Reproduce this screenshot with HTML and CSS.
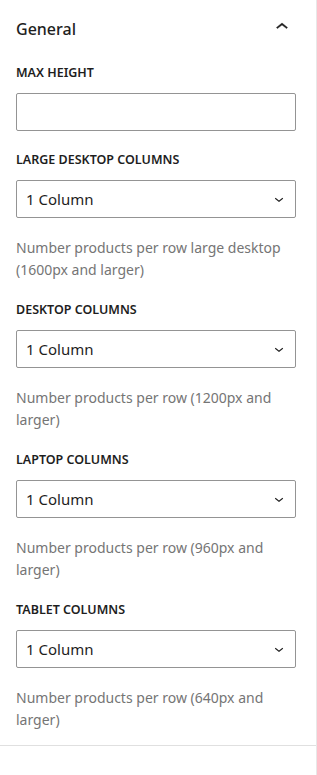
FILE: index.html
```html
<!DOCTYPE html>
<html lang="en">
  <head>
    <meta charset="UTF-8" />
    <meta name="viewport" content="width=device-width, initial-scale=1.0" />
    <title>Block Settings</title>

    <link rel="stylesheet" href="styles.css">
  </head>

  <body>
    <div class="sidebar">
      <div class="panel">
        <button class="panel-header">
          <span class="panel-title">General</span>
          <svg class="panel-toggle" viewBox="0 0 24 24" width="24" height="24">
            <path d="M6.5 12.4L12 8l5.5 4.4-.9 1.2L12 10l-4.6 3.6-1-1.2z" />
          </svg>
        </button>

        <div class="panel-body">
          <div class="field">
            <label class="field-label" for="max-height">Max Height</label>
            <input class="text-input" id="max-height" type="text" />
          </div>

          <div class="field">
            <label class="field-label" for="cols-xl">Large Desktop Columns</label>
            <div class="select-wrap">
              <select id="cols-xl" class="select">
                <option>1 Column</option>
                <option>2 Columns</option>
                <option>3 Columns</option>
                <option>4 Columns</option>
              </select>
              <svg class="select-arrow" viewBox="0 0 24 24" width="18" height="18">
                <path d="M17.5 11.6L12 16l-5.5-4.4.9-1.2L12 14l4.6-3.6 1 1.2z" />
              </svg>
            </div>
            <p class="help">Number products per row large desktop (1600px and larger)</p>
          </div>

          <div class="field">
            <label class="field-label" for="cols-lg">Desktop Columns</label>
            <div class="select-wrap">
              <select id="cols-lg" class="select">
                <option>1 Column</option>
                <option>2 Columns</option>
                <option>3 Columns</option>
              </select>
              <svg class="select-arrow" viewBox="0 0 24 24" width="18" height="18">
                <path d="M17.5 11.6L12 16l-5.5-4.4.9-1.2L12 14l4.6-3.6 1 1.2z" />
              </svg>
            </div>
            <p class="help">Number products per row (1200px and larger)</p>
          </div>

          <div class="field">
            <label class="field-label" for="cols-md">Laptop Columns</label>
            <div class="select-wrap">
              <select id="cols-md" class="select">
                <option>1 Column</option>
                <option>2 Columns</option>
                <option>3 Columns</option>
              </select>
              <svg class="select-arrow" viewBox="0 0 24 24" width="18" height="18">
                <path d="M17.5 11.6L12 16l-5.5-4.4.9-1.2L12 14l4.6-3.6 1 1.2z" />
              </svg>
            </div>
            <p class="help">Number products per row (960px and larger)</p>
          </div>

          <div class="field">
            <label class="field-label" for="cols-sm">Tablet Columns</label>
            <div class="select-wrap">
              <select id="cols-sm" class="select">
                <option>1 Column</option>
                <option>2 Columns</option>
              </select>
              <svg class="select-arrow" viewBox="0 0 24 24" width="18" height="18">
                <path d="M17.5 11.6L12 16l-5.5-4.4.9-1.2L12 14l4.6-3.6 1 1.2z" />
              </svg>
            </div>
            <p class="help">Number products per row (640px and larger)</p>
          </div>
        </div>
      </div>
    </div>
  </body>
</html>
```

FILE: styles.css
```css
* {
  box-sizing: border-box;
}

body {
  margin: 0;
  font-family: "Noto Sans", "Open Sans", sans-serif;
  background: white;
  color: #1e1e1e;
}

.sidebar {
  width: 317px;
  min-height: 100vh;
  border-right: 1px solid #e8e8e8;
}

.panel {
  border-bottom: 1px solid #e0e0e0;
}

.panel-header {
  display: flex;
  align-items: center;
  justify-content: space-between;
  width: 100%;
  height: 58px;
  padding: 0 22px 0 16px;
  background: none;
  border: none;
  font-family: inherit;
  cursor: pointer;
}

.panel-title {
  font-size: 16px;
  font-weight: 500;
  color: #1e1e1e;
}

.panel-toggle {
  fill: #1e1e1e;
  margin-top: -4px;
  stroke: #1e1e1e;
  stroke-width: 0.4;
}

.panel-body {
  padding: 7px 20px 14px 16px;
}

.field {
  margin-bottom: 21px;
}

.field:last-child {
  margin-bottom: 0;
}

.field-label {
  display: block;
  font-size: 12.5px;
  font-weight: 600;
  line-height: 16px;
  text-transform: uppercase;
  margin-bottom: 12px;
}

.text-input,
.select {
  width: 100%;
  height: 38px;
  border: 1px solid #949494;
  border-radius: 2px;
  background: white;
  font-family: inherit;
  color: #1e1e1e;
}

.select-wrap {
  position: relative;
}

.select {
  appearance: none;
  padding: 0 32px 0 9px;
  font-size: 15px;
}

.select-arrow {
  position: absolute;
  right: 8px;
  top: 10px;
  fill: #1e1e1e;
  pointer-events: none;
}

.help {
  margin: 19px 0 0;
  font-size: 14px;
  line-height: 22px;
  color: #757575;
}
```
